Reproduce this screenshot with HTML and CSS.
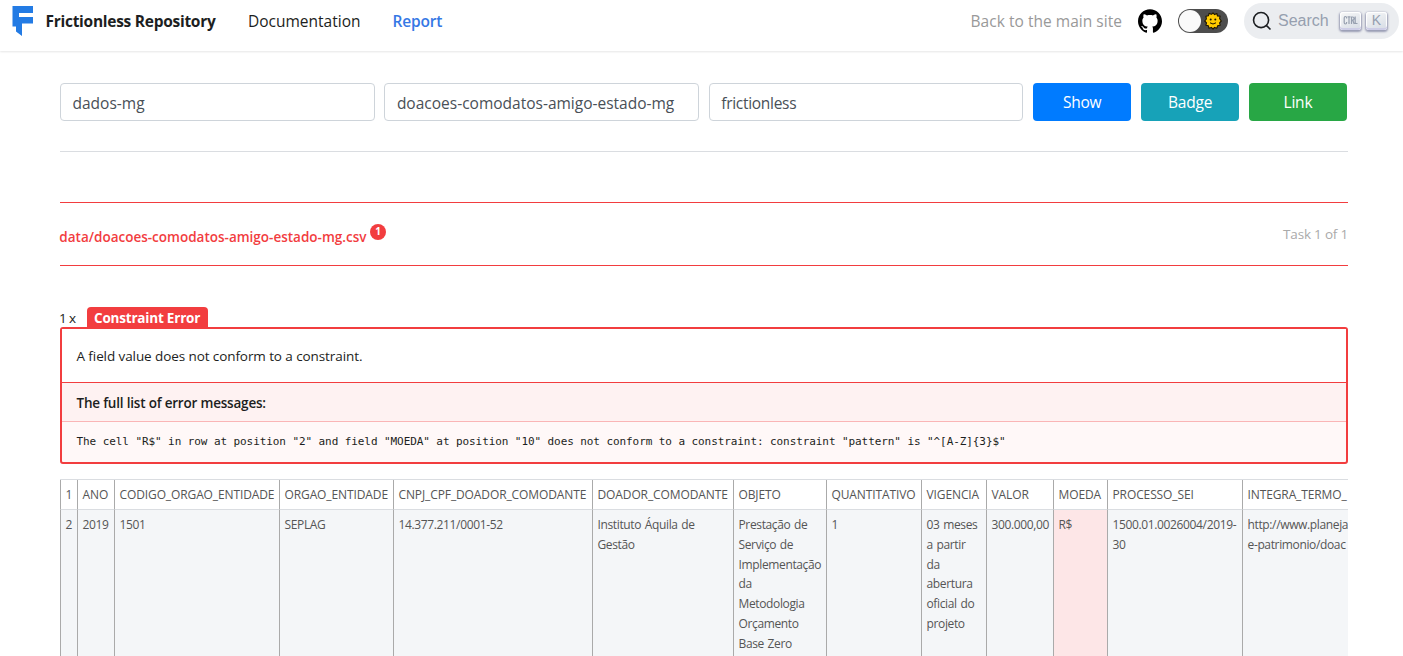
FILE: index.html
```html
<!DOCTYPE html>
<html lang="en">
<head>
<meta charset="utf-8">
<title>Frictionless Repository</title>
<link rel="stylesheet" href="styles.css">
</head>
<body>
<nav class="navbar">
  <a class="brand">
    <svg class="logo" width="22" height="32" viewBox="0 0 22 32"><path fill="#237be4" d="M.5 1H21v7H7v4h14v6.500H10V31L4 26.500V21.500H.5z"/></svg>
    <span class="brand-name">Frictionless Repository</span>
  </a>
  <a class="nav-link">Documentation</a>
  <a class="nav-link nav-active">Report</a>
  <div class="nav-right">
    <a class="main-site">Back to the main site</a>
    <svg class="github" width="24" height="24" viewBox="0 0 24 24"><path d="M12 .297c-6.630 0-12 5.373-12 12 0 5.303 3.438 9.800 8.205 11.385.6.113.82-.258.82-.577 0-.285-.01-1.040-.015-2.040-3.338.724-4.042-1.610-4.042-1.610C4.422 18.070 3.633 17.700 3.633 17.700c-1.087-.744.084-.729.084-.729 1.205.084 1.838 1.236 1.838 1.236 1.070 1.835 2.809 1.305 3.495.998.108-.776.417-1.305.76-1.605-2.665-.3-5.466-1.332-5.466-5.930 0-1.310.465-2.380 1.235-3.220-.135-.303-.54-1.523.105-3.176 0 0 1.005-.322 3.300 1.230.96-.267 1.980-.399 3-.405 1.020.006 2.040.138 3 .405 2.280-1.552 3.285-1.230 3.285-1.230.645 1.653.24 2.873.12 3.176.765.84 1.230 1.910 1.230 3.220 0 4.610-2.805 5.625-5.475 5.920.42.36.81 1.096.81 2.220 0 1.606-.015 2.896-.015 3.286 0 .315.21.69.825.57C20.565 22.092 24 17.592 24 12.297c0-6.627-5.373-12-12-12"/></svg>
    <div class="toggle">
      <span class="thumb"></span>
      <svg class="sun" width="18" height="18" viewBox="0 0 18 18"><path fill="#ffcb00" stroke="#1c1400" stroke-width="1.100" stroke-linejoin="round" d="M9 .8l1.600 1.800L12.900 1.500l.6 2.500 2.600.1-.5 2.500L17.300 9l-1.700 1.800.6 2.500-2.600.5-.7 2.400-2.400-.8L9 17.200l-1.600-1.800-2.400.9-.6-2.500-2.500-.5.6-2.500L.7 9l1.700-2L1.900 4.300l2.500-.5.7-2.400 2.400.9z"/><circle cx="6.700" cy="7.600" r="1" fill="#1c1400"/><circle cx="11.300" cy="7.600" r="1" fill="#1c1400"/><path d="M6 10.800q3 2.400 6 0" fill="none" stroke="#1c1400"/></svg>
    </div>
    <div class="search">
      <svg width="20" height="20" viewBox="0 0 20 20"><path d="M14.386 14.386l4.088 4.088-4.088-4.088c-2.942 2.942-7.711 2.942-10.653 0-2.942-2.942-2.942-7.711 0-10.653 2.942-2.942 7.711-2.942 10.653 0 2.942 2.942 2.942 7.711 0 10.653z" stroke="#1c1e21" stroke-width="1.600" fill="none" stroke-linecap="round"/></svg>
      <span class="search-text">Search</span>
      <kbd class="key key-ctrl"><svg width="15" height="15" viewBox="0 0 15 15"><path fill="none" stroke="#969faf" stroke-width="1.200" d="M3.600 5.500V5c0-2-2.400-2-2.400 0v4.500c0 2 2.400 2 2.400 0V9M4.500 3.900h3M6 3.900V11M8.500 11V4h1.200c1.800 0 1.800 3.200 0 3.200H8.500M9.700 7.200l1.500 3.800M12.200 3.400v7.100h2.300"/></svg></kbd>
      <kbd class="key">K</kbd>
    </div>
  </div>
</nav>

<main class="page">
  <form class="controls">
    <div class="field">dados-mg</div>
    <div class="field">doacoes-comodatos-amigo-estado-mg</div>
    <div class="field field-tight">frictionless</div>
    <div class="btn btn-show">Show</div>
    <div class="btn btn-badge">Badge</div>
    <div class="btn btn-link">Link</div>
  </form>

  <section class="report">
    <header class="file">
      <h4 class="file-name">data/doacoes-comodatos-amigo-estado-mg.csv<span class="count">1</span></h4>
      <span class="task">Task 1 of 1</span>
    </header>

    <div class="error-head"><span class="times">1 x</span><span class="error-tag">Constraint Error</span></div>
    <div class="error-box">
      <p class="error-desc">A field value does not conform to a constraint.</p>
      <p class="list-title">The full list of error messages:</p>
      <p class="message">The cell "R$" in row at position "2" and field "MOEDA" at position "10" does not conform to a constraint: constraint "pattern" is "^[A-Z]{3}$"</p>
    </div>

    <div class="table-wrap">
      <table class="data">
        <colgroup><col class="c1"><col class="c2"><col class="c3"><col class="c4"><col class="c5"><col class="c6"><col class="c7"><col class="c8"><col class="c9"><col class="c10"><col class="c11"><col class="c12"><col class="c13"></colgroup>
        <tr><th>1</th><th>ANO</th><th>CODIGO_ORGAO_ENTIDADE</th><th>ORGAO_ENTIDADE</th><th>CNPJ_CPF_DOADOR_COMODANTE</th><th>DOADOR_COMODANTE</th><th>OBJETO</th><th>QUANTITATIVO</th><th>VIGENCIA</th><th>VALOR</th><th>MOEDA</th><th>PROCESSO_SEI</th><th>INTEGRA_TERMO_</th></tr>
        <tr class="values"><td>2</td><td>2019</td><td>1501</td><td>SEPLAG</td><td>14.377.211/0001-52</td><td>Instituto Áquila de<br>Gestão</td><td>Prestação de<br>Serviço de<br>Implementação<br>da<br>Metodologia<br>Orçamento<br>Base Zero</td><td>1</td><td>03 meses<br>a partir<br>da<br>abertura<br>oficial do<br>projeto</td><td>300.000,00</td><td class="bad">R$</td><td>1500.01.0026004/2019-<br>30</td><td>http://www.planeja<br>e-patrimonio/doac</td></tr>
      </table>
    </div>
  </section>
</main>
</body>
</html>
```
FILE: styles.css
```css
* { box-sizing: border-box; }
body { margin: 0; height: 656px; overflow: hidden; background: #fff; color: #1c1e21; font: 15.5px "Open Sans", sans-serif; }
p, h4 { margin: 0; }

.navbar { display: flex; align-items: center; height: 51px; padding: 0 4px 9px 12px; box-shadow: 0 1px 2px rgba(0, 0, 0, .1); white-space: nowrap; }
.brand { display: flex; align-items: center; gap: 11.500px; width: 236px; }
.logo { display: block; }
.brand-name { font-weight: 700; letter-spacing: -.27px; }
.nav-link { width: 144.500px; font-weight: 500; }
.nav-active { color: #3578e5; font-weight: 600; letter-spacing: -.2px; }
.nav-right { display: flex; align-items: center; margin-left: auto; }
.main-site { color: #999; letter-spacing: .03px; margin-right: 16px; }
.github { margin-right: 16px; }
.toggle { display: flex; align-items: center; justify-content: space-between; width: 50px; height: 24px; padding: 0 6px 0 1px; border-radius: 12px; background: #4d4d4d; margin-right: 16px; }
.thumb { width: 22px; height: 22px; border-radius: 50%; background: #fafafa; }
.search { display: flex; align-items: center; width: 155px; height: 36px; padding: 0 12px 0 8px; border-radius: 18px; background: #ebedf0; color: #969faf; }
.search-text { font: 16px "Liberation Sans", Arial, sans-serif; margin: 0 auto 0 6px; }
.key { display: flex; align-items: center; justify-content: center; width: 21px; height: 18px; padding-bottom: 2px; margin-left: 5px; border-radius: 3px; background: linear-gradient(-26.5deg, #d5dbe4, #f8f8f8); box-shadow: inset 0 -2px 0 0 #cdcde6, inset 0 0 1px 1px #fff, 0 1px 2px 1px rgba(30, 35, 90, .4); color: #969faf; font: 14px "Liberation Sans", Arial, sans-serif; }

.page { padding: 32px 55px 0 60px; }
.controls { display: grid; grid-template-columns: repeat(3, 314.500px) repeat(3, 98px); column-gap: 9.900px; height: 69px; border-bottom: 1px solid #dadde1; }
.field { height: 38px; padding: 0 11.500px; line-height: 39px; border: 1px solid #ced4da; border-radius: 4px; color: #495057; }
.field-tight { letter-spacing: -.3px; }
.btn { height: 38px; line-height: 38px; text-align: center; border-radius: 4px; color: #fff; letter-spacing: -.2px; }
.btn-show { background: #007bff; }
.btn-badge { background: #17a2b8; }
.btn-link { background: #28a745; }

.report { margin-top: 50px; font-size: 13.5px; }
.file { display: flex; justify-content: space-between; align-items: center; height: 64px; border-top: 1px solid #f23d3f; border-bottom: 1px solid #f23d3f; }
.file-name { display: flex; align-items: center; padding-top: 5px; margin-left: -.7px; font-size: 13.5px; font-weight: 600; color: #f23d3f; }
.count { width: 16px; height: 16px; margin: -10px 0 0 3.500px; border-radius: 8px; background: #f23d3f; color: #fff; font-size: 10px; font-weight: 700; line-height: 15px; text-align: center; }
.task { color: #aaa; letter-spacing: -.2px; }
.error-head { display: flex; align-items: flex-end; height: 61px; }
.times { width: 28px; margin-left: -1px; line-height: 17px; letter-spacing: -.6px; font-weight: 500; }
.error-tag { height: 20px; padding: 0 7px; line-height: 23px; border-radius: 4px 4px 0 0; background: #f23d3f; color: #fff; font-weight: 700; letter-spacing: -.2px; width: 121px; white-space: nowrap; }
.error-box { height: 137px; border: 2px solid #f23d3f; border-radius: 3px; background: #fff8f8; }
.error-desc { height: 53px; padding-left: 14.500px; line-height: 54px; background: #fff; letter-spacing: -.09px; }
.list-title { height: 40px; padding-left: 14.500px; line-height: 40px; border-top: 1px solid #f23d3f; border-bottom: 1px solid #fab5b6; background: #fef2f2; font-weight: 600; letter-spacing: -.2px; }
.message { padding-left: 14.500px; line-height: 40px; font-family: "DejaVu Sans Mono", monospace; font-size: 11px; letter-spacing: -.08px; }

.table-wrap { margin-top: 15px; height: 200px; overflow: hidden; border-top: 1px solid #dadde1; }
.data { table-layout: fixed; width: 1288px; border-collapse: separate; border-spacing: 0; font-size: 12px; line-height: 19.800px; color: #555; }
.data th, .data td { padding: 5px 0 0 4.500px; border-left: 1px solid #aaa; text-align: left; vertical-align: top; white-space: nowrap; }
.data th { height: 30px; font-weight: 500; letter-spacing: -.11px; border-bottom: 1px solid #dadde1; }
.data td { height: 200px; letter-spacing: -.36px; word-spacing: .9px; background: #f4f6f8; }
.data .bad { background: #fde6e7; }
.c1 { width: 17px; } .c2 { width: 37px; } .c3 { width: 165px; } .c4 { width: 114px; }
.c5 { width: 199px; } .c6 { width: 141px; } .c7 { width: 93px; } .c8 { width: 95px; }
.c9 { width: 65px; } .c10 { width: 67px; } .c11 { width: 54px; } .c12 { width: 135px; } .c13 { width: 106px; }
```
